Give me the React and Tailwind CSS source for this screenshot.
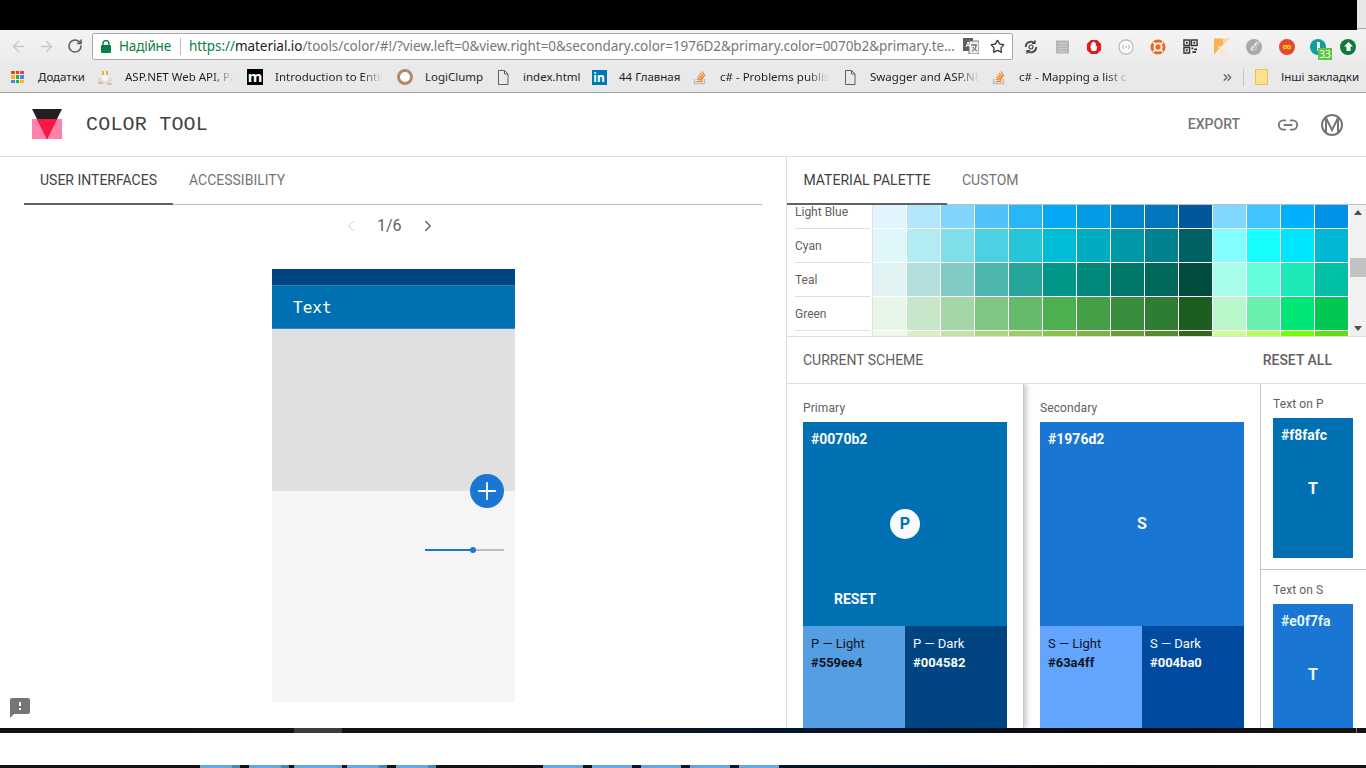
import { ArrowLeft, ArrowRight, RotateCw, Star, ChevronLeft, ChevronRight, Plus, Link2, ChevronsRight } from 'lucide-react'

const ui = "font-['Noto_Sans','Open_Sans',sans-serif]"
const rb = "font-['Roboto',sans-serif]"

const palette = [
  ['Light Blue', ['#e1f5fe', '#b3e5fc', '#81d4fa', '#4fc3f7', '#29b6f6', '#03a9f4', '#039be5', '#0288d1', '#0277bd', '#01579b', '#80d8ff', '#40c4ff', '#00b0ff', '#0091ea']],
  ['Cyan', ['#e0f7fa', '#b2ebf2', '#80deea', '#4dd0e1', '#26c6da', '#00bcd4', '#00acc1', '#0097a7', '#00838f', '#006064', '#84ffff', '#18ffff', '#00e5ff', '#00b8d4']],
  ['Teal', ['#e0f2f1', '#b2dfdb', '#80cbc4', '#4db6ac', '#26a69a', '#009688', '#00897b', '#00796b', '#00695c', '#004d40', '#a7ffeb', '#64ffda', '#1de9b6', '#00bfa5']],
  ['Green', ['#e8f5e9', '#c8e6c9', '#a5d6a7', '#81c784', '#66bb6a', '#4caf50', '#43a047', '#388e3c', '#2e7d32', '#1b5e20', '#b9f6ca', '#69f0ae', '#00e676', '#00c853']],
  ['', ['#f1f8e9', '#dcedc8', '#c5e1a5', '#aed581', '#9ccc65', '#8bc34a', '#7cb342', '#689f38', '#558b2f', '#33691e', '#ccff90', '#b2ff59', '#76ff03', '#64dd17']],
]

function DocIcon() {
  return (
    <svg width="12" height="15" viewBox="0 0 12 15" fill="none" stroke="#5f5f5f">
      <path d="M1.500.5h6l3.500 3.500v10.500h-9.500z" />
      <path d="M7.500.5v3.500h3.500" />
    </svg>
  )
}

function SoIcon() {
  return (
    <svg width="16" height="16" viewBox="0 0 16 16" fill="none">
      <path d="M2.500 10v4.500h10V10" stroke="#bcbbbb" strokeWidth="1.300" />
      <path d="M4.500 12.500h6M4.700 10.500l5.800.6M5.300 8.400l5.500 1.600M6.300 6.300l5 2.800M7.900 4.300l4.200 3.800M10 2.500l3 4.600" stroke="#f48024" strokeWidth="1.200" />
    </svg>
  )
}

function Bookmark({ icon, text, width, fade = true, className = '' }) {
  return (
    <div className={`flex items-center shrink-0 ${className}`}>
      <div className="w-[16px] h-[16px] flex items-center justify-center">{icon}</div>
      <span
        className={`ml-[12px] text-[11.500px] whitespace-nowrap text-[#1f1f1f] ${fade ? 'overflow-hidden [mask-image:linear-gradient(to_right,black_80%,transparent)]' : ''}`}
        style={{ width }}
      >
        {text}
      </span>
    </div>
  )
}

function ExtensionIcons() {
  return (
    <div className="flex items-center ml-[10px] h-[26px] mt-[1px]">
      <svg width="16" height="16" viewBox="0 0 18 18" fill="none">
        <path d="M3 9a6 6 0 0 1 10-4.500M15 9a6 6 0 0 1-10 4.500" stroke="#444" strokeWidth="2" />
        <path d="M13.500 1.500v3.500h-3.500M4.500 16.500v-3.500h3.500" stroke="#444" strokeWidth="1.500" />
        <circle cx="9" cy="9" r="2.200" stroke="#444" strokeWidth="1.300" />
      </svg>
      <svg width="13" height="14" viewBox="0 0 14 14" className="ml-[17px]">
        <rect width="14" height="14" fill="#b4b4b4" />
        <path d="M2 3h10M2 6h10M2 9h10M2 12h10" stroke="#d6d6d6" />
      </svg>
      <svg width="16" height="18" viewBox="0 0 18 18" className="ml-[17px]">
        <path d="M5.500 1h7L17 5.500v7L12.500 17h-7L1 12.500v-7z" fill="#d81e1e" />
        <path d="M6.500 13.500 5 9V7l1 1V4.500h1V3.500h1V3h1v.5h1v1h1V9l.5-1h1L12 12l-1 1.500z" fill="#fff" />
      </svg>
      <svg width="16" height="16" viewBox="0 0 18 18" fill="none" className="ml-[16px]">
        <circle cx="9" cy="9" r="8" fill="#fafafa" stroke="#b5b5b5" strokeWidth="1.200" />
        <path d="M6.500 7c-1 0-.5 2-1.500 2 1 0 .5 2 1.500 2M11.500 7c1 0 .5 2 1.500 2-1 0-.5 2-1.500 2M8 9h2" stroke="#9a9a9a" />
      </svg>
      <svg width="16" height="16" viewBox="0 0 18 18" fill="none" className="ml-[16px]">
        <circle cx="9" cy="9" r="8.500" fill="#f06a1d" />
        <circle cx="9" cy="9" r="4" stroke="#fff" strokeWidth="2" />
        <path d="M3.500 3.500 6.500 6.500M14.500 3.500l-3 3M3.500 14.500l3-3M14.500 14.500l-3-3" stroke="#fff" strokeWidth="1.800" />
      </svg>
      <svg width="15" height="15" viewBox="0 0 16 16" className="ml-[17px]">
        <rect width="16" height="16" fill="#f4f4f4" />
        <path d="M1 1h6v6H1zM9 1h6v6H9zM1 9h6v6H1z" fill="none" stroke="#333" strokeWidth="1.500" />
        <path d="M3 3h2v2H3zM11 3h2v2h-2zM3 11h2v2H3zM9 9h2v2H9zM12 10h3v2h-3zM10 13h4v2h-4z" fill="#333" />
      </svg>
      <svg width="16" height="18" viewBox="0 0 17 18" className="ml-[16px]">
        <path d="M0 0h10v6L0 17z" fill="#f9b54c" />
        <path d="M10 0h7L10 7z" fill="#f7d9a4" />
        <path d="M4 7l13 11H8z" fill="#fbe7cf" />
      </svg>
      <div className="ml-[16px] w-[16px] h-[16px] rounded-full bg-[#a9a9a9] flex items-center justify-center text-white text-[13px] italic font-['Liberation_Serif',serif]">
        ℰ
      </div>
      <div className="ml-[17px] w-[16px] h-[16px] rounded-full bg-[#e5482f] flex items-center justify-center text-[#f5c518] text-[14px] font-bold leading-none">
        ∞
      </div>
      <div className="relative ml-[15px] w-[16px] h-[16px] rounded-full bg-[#0f9d9d] flex items-center justify-center">
        <div className="w-[3px] h-[9px] bg-white" />
        <span className={`absolute left-[8px] top-[9px] w-[14px] h-[12px] bg-[#5cc63c] text-white text-[10px] leading-[12px] text-center ${ui}`}>33</span>
      </div>
      <div className="ml-[14px] w-[16px] h-[16px] rounded-full bg-[#0f7a3c] flex items-center justify-center">
        <svg width="9" height="9" viewBox="0 0 9 9"><path d="M4.500 0 9 4.500H6.500V9h-4V4.500H0z" fill="#fff" /></svg>
      </div>
    </div>
  )
}

function BrowserChrome() {
  return (
    <div className={`shrink-0 ${ui}`}>
      <div className="h-[32px] bg-gradient-to-b from-[#f4f4f4] to-[#ececec] flex items-center pl-[10px]">
        <ArrowLeft size={17} className="text-[#c8c8c8]" />
        <ArrowRight size={17} className="text-[#c8c8c8] ml-[11px]" />
        <RotateCw size={16} strokeWidth={2.400} className="text-[#5f5f5f] ml-[12px]" />
        <div className="ml-[9px] w-[921px] h-[27px] bg-white border border-[#a9a9a9] rounded-[2px] flex items-center pl-[8px] text-[13.500px] whitespace-nowrap overflow-hidden">
          <svg width="10" height="13" viewBox="0 0 10 13">
            <path d="M2 6V3.500a3 3 0 0 1 6 0V6" fill="none" stroke="#0b8043" strokeWidth="1.400" />
            <rect y="5" width="10" height="8" rx="1" fill="#0b8043" />
          </svg>
          <span className="ml-[8px] text-[#0b8043] tracking-[-0.200px]">Надійне</span>
          <span className="ml-[9px] w-px h-[17px] bg-[#bdbdbd]" />
          <span className="ml-[8px] w-[773px] tracking-[-0.060px] overflow-hidden">
            <span className="text-[#0b8043]">https://</span>
            <span className="text-[#222]">material.io</span>
            <span className="text-[#777]">/tools/color/#!/?view.left=0&amp;view.right=0&amp;secondary.color=1976D2&amp;primary.color=0070b2&amp;primary.te...</span>
          </span>
          <svg width="16" height="16" viewBox="0 0 16 16" className="ml-[1px] shrink-0">
            <rect width="10" height="13" fill="#5f5f5f" />
            <rect x="6" y="3" width="10" height="13" fill="#eee" stroke="#777" />
            <path d="M3 9l2-5 2 5M3.800 7.500h2.400" stroke="#fff" fill="none" />
            <path d="M8 7h6M11 6v1M9 13c3-1 4-3 4-6M10 9c1 2 2 3 4 4" stroke="#555" fill="none" />
          </svg>
          <Star size={15} strokeWidth={2} className="text-[#333] ml-[11px] shrink-0" />
        </div>
        <ExtensionIcons />
      </div>
      <div className="h-[31px] bg-[#e9e9e9] border-b border-[#a3a3a3] flex items-center">
        <div className="ml-[11px] grid grid-cols-3 gap-[1px] w-[13px] shrink-0">
          {['#ea4335', '#ea4335', '#ea4335', '#fbbc05', '#34a853', '#4285f4', '#4285f4', '#34a853', '#fbbc05'].map((c, i) => (
            <span key={i} className="w-[3.500px] h-[3.500px]" style={{ background: c }} />
          ))}
        </div>
        <span className="ml-[14px] text-[11.500px] text-[#1f1f1f] w-[46px] whitespace-nowrap">Додатки</span>
        <Bookmark
          className="ml-[13px]"
          icon={<svg width="16" height="16" viewBox="0 0 16 16"><ellipse cx="8" cy="11" rx="7" ry="3.500" fill="#d9d9d9" /><path d="M6 2v5M10 2v5" stroke="#e8b23c" strokeWidth="2" /><circle cx="8" cy="9" r="3.500" fill="#f4f4f4" /><path d="M1 14h5M10 15h5" stroke="#e89a2c" /></svg>}
          text="ASP.NET Web API, Pa"
          width={109}
        />
        <Bookmark
          className="ml-[13px]"
          icon={<span className="w-[16px] h-[16px] bg-black text-white text-[15px] leading-[14px] text-center font-bold">m</span>}
          text="Introduction to Entity"
          width={108}
        />
        <Bookmark
          className="ml-[14px]"
          icon={<span className="w-[16px] h-[16px] rounded-full border-[3px] border-[#b08a68] bg-white" />}
          text="LogiClump"
          width={57}
          fade={false}
        />
        <Bookmark className="ml-[13px]" icon={<DocIcon />} text="index.html" width={55} fade={false} />
        <Bookmark
          className="ml-[13px]"
          icon={<span className="w-[15px] h-[15px] bg-[#0077b5] text-white text-[12px] leading-[15px] text-center font-bold">in</span>}
          text="44 Главная"
          width={60}
          fade={false}
        />
        <Bookmark className="ml-[13px]" icon={<SoIcon />} text="c# - Problems publis" width={109} />
        <Bookmark className="ml-[13px]" icon={<DocIcon />} text="Swagger and ASP.NE" width={109} />
        <Bookmark className="ml-[12px]" icon={<SoIcon />} text="c# - Mapping a list c" width={110} />
        <ChevronsRight size={13} strokeWidth={2.500} className="text-[#666] ml-[92px]" />
        <span className="ml-[9px] w-px h-[17px] bg-[#c4c4c4]" />
        <svg width="13" height="16" viewBox="0 0 13 16" className="ml-[11px]">
          <path d="M.5.5h12v15H.5z" fill="#fbe08f" stroke="#e8c14f" />
        </svg>
        <span className="ml-[13px] text-[11.500px] text-[#1f1f1f] whitespace-nowrap">Інші закладки</span>
      </div>
    </div>
  )
}

function Header() {
  return (
    <div className="h-[64px] shrink-0 bg-white border-b border-[#e0e0e0] flex items-center pl-[32px] pr-[22px]">
      <svg width="30" height="30" viewBox="0 0 30 30" className="mb-[2px]">
        <rect y="10" width="30" height="20" fill="#ff80ab" />
        <path d="M0 0h30L15 30z" fill="#212121" />
        <path d="M5 10h20L15 30z" fill="#ff1744" />
      </svg>
      <span className="ml-[24px] text-[20px] tracking-[0.200px] text-[#424242] font-['Liberation_Mono',monospace] whitespace-nowrap">COLOR TOOL</span>
      <span className={`ml-auto text-[14px] font-medium text-[#757575] ${rb}`}>EXPORT</span>
      <Link2 size={22} strokeWidth={2} className="text-[#757575] ml-[37px]" />
      <svg width="24" height="24" viewBox="0 0 24 24" fill="none" stroke="#757575" className="ml-[21px]">
        <circle cx="12" cy="12" r="10" strokeWidth="2" />
        <path d="M6 4.500v15M18 4.500v15M6 5l6 12 6-12" strokeWidth="2" />
      </svg>
    </div>
  )
}

function PhonePreview() {
  return (
    <div className="relative mt-[23px] ml-[272px] w-[243px] h-[433px] flex flex-col">
      <div className="h-[17px] bg-[#004582] border-b border-[#3a7cb0]" />
      <div className="h-[43px] bg-[#0070b2] border-b border-[#2f8ac4] pt-[2px] pl-[21px] flex items-center">
        <span className="text-[16px] text-[#f8fafc] font-['DejaVu_Sans_Mono',monospace]">Text</span>
      </div>
      <div className="h-[162px] bg-[#e0e0e0]" />
      <div className="flex-1 bg-[#f5f5f5] flex flex-col items-end pr-[11px] pt-[58px]">
        <div className="w-[79px] h-[2px] bg-[#bdbdbd] relative">
          <div className="w-[47px] h-[2px] bg-[#1976d2]" />
          <div className="absolute left-[45px] top-[-2px] w-[6px] h-[6px] rounded-full bg-[#1976d2]" />
        </div>
      </div>
      <div className="absolute left-[198px] top-[205px] w-[34px] h-[34px] rounded-full bg-[#1976d2] flex items-center justify-center">
        <Plus size={28} strokeWidth={1.600} className="text-[#f8fafc]" />
      </div>
    </div>
  )
}

function LeftPanel() {
  return (
    <div className={`relative w-[786px] shrink-0 bg-white ${rb}`}>
      <div className="mx-[24px] h-[48px] border-b border-[#bdbdbd] flex text-[14px]">
        <div className="w-[149px] h-[48px] pt-[1px] border-b-2 border-[#616161] flex items-center justify-center text-[#424242]">USER INTERFACES</div>
        <div className="ml-[16px] h-[47px] flex items-center text-[#757575]">ACCESSIBILITY</div>
      </div>
      <div className="h-[41px] flex items-center">
        <ChevronLeft size={18} strokeWidth={1.500} className="ml-[342px] text-[#e0e0e0]" />
        <span className="ml-[17px] text-[16px] text-[#5f5f5f]">1/6</span>
        <ChevronRight size={18} strokeWidth={1.800} className="ml-[17px] text-[#616161]" />
      </div>
      <PhonePreview />
      <svg width="24" height="24" viewBox="0 0 24 24" className="absolute left-[8px] bottom-[8px]">
        <path fill="#757575" d="M20 2H4c-1.100 0-1.990.9-1.990 2L2 22l4-4h14c1.100 0 2-.9 2-2V4c0-1.100-.9-2-2-2zm-7 12h-2v-2h2v2zm0-4h-2V6h2v4z" />
      </svg>
    </div>
  )
}

function Palette() {
  return (
    <div className="h-[132px] flex overflow-hidden border-b border-[#e0e0e0] shrink-0">
      <div className="w-[563px] -mt-[10px]">
        {palette.map(([name, colors], i) => (
          <div key={i} className="h-[34px] flex">
            <div className="w-[86px] pl-[8px] pr-[2px] border-r border-[#e4e4e4]">
              <div className="h-[34px] border-b border-[#e0e0e0] flex items-center text-[12px] text-[#616161]">{name}</div>
            </div>
            <div className="flex">
              {colors.map(c => (
                <div key={c} className="w-[34px] h-[34px] border-r border-b border-white" style={{ background: c }} />
              ))}
            </div>
          </div>
        ))}
      </div>
      <div className="w-[16px] bg-[#f1f1f1] flex flex-col items-center justify-between py-[5px] relative">
        <svg width="8" height="5" viewBox="0 0 8 5"><path d="M4 0l4 5H0z" fill="#505050" /></svg>
        <div className="absolute top-[53px] left-0 w-[16px] h-[19px] bg-[#c1c1c1]" />
        <svg width="8" height="5" viewBox="0 0 8 5"><path d="M0 0h8L4 5z" fill="#505050" /></svg>
      </div>
    </div>
  )
}

function ShadeCell({ name, hex, bg, dark }) {
  return (
    <div className={`w-[102px] pl-[8px] pt-[9px] text-[13px] ${dark ? 'text-[#f8fafc]' : 'text-[#10161c]'}`} style={{ background: bg }}>
      <div className="leading-[18px]">{name}</div>
      <div className="mt-[1px] font-bold leading-[18px]">{hex}</div>
    </div>
  )
}

function ColorCard({ title, hex, letter, light, dark, className = '', reset }) {
  return (
    <div className={`shrink-0 px-[16px] pt-[16px] bg-white border-r border-[#c4c4c4] ${className}`}>
      <div className="text-[12px] text-[#616161] leading-[16px] h-[22px] tracking-[0.100px]">{title}</div>
      <div className="relative h-[204px] pl-[8px] pt-[8px] text-[14px] font-bold leading-[18px] text-[#f8fafc]" style={{ background: hex }}>
        {hex}
        {letter === 'P' ? (
          <div className="absolute left-[87px] top-[87px] w-[30px] h-[30px] rounded-full bg-[#f8fafc] text-[#0070b2] text-[16px] flex items-center justify-center">P</div>
        ) : (
          <div className="absolute left-[87px] top-[87px] w-[30px] h-[30px] text-[16px] flex items-center justify-center">S</div>
        )}
        {reset && <div className="absolute left-[31px] top-[169px] leading-[16px]">RESET</div>}
      </div>
      <div className="flex h-[102px]">
        <ShadeCell {...light} />
        <ShadeCell {...dark} dark />
      </div>
    </div>
  )
}

function TextSwatch({ title, hex, bg, color, className = '' }) {
  return (
    <div className={`px-[12px] pt-[12px] ${className}`}>
      <div className="text-[12px] text-[#616161] leading-[16px] h-[22px] tracking-[0.100px]">{title}</div>
      <div className="w-[80px] h-[140px] pl-[8px] pt-[8px] text-[14px] font-bold leading-[18px]" style={{ background: bg, color }}>
        {hex}
        <div className="mt-[36px] ml-[-8px] text-center text-[16px]">T</div>
      </div>
    </div>
  )
}

function RightPanel() {
  return (
    <div className={`w-[580px] shrink-0 bg-white border-l border-[#dcdcdc] flex flex-col overflow-hidden ${rb}`}>
      <div className="h-[48px] shrink-0 border-b border-[#bdbdbd] flex text-[14px]">
        <div className="w-[160px] h-[48px] pt-[1px] border-b-2 border-[#616161] flex items-center justify-center text-[#424242]">MATERIAL PALETTE</div>
        <div className="ml-[15px] h-[47px] flex items-center text-[#757575]">CUSTOM</div>
      </div>
      <Palette />
      <div className="h-[47px] pt-[1px] shrink-0 border-b border-[#e0e0e0] flex items-center justify-between pl-[16px] pr-[34px] text-[14px]">
        <span className="text-[#616161]">CURRENT SCHEME</span>
        <span className="font-medium text-[#616161]">RESET ALL</span>
      </div>
      <div className="flex flex-1 min-h-0 overflow-hidden">
        <ColorCard
          title="Primary" hex="#0070b2" letter="P" reset
          className="relative w-[238px] -ml-px border-l shadow-[2px_0_6px_rgba(0,0,0,0.25)]"
          light={{ name: 'P — Light', hex: '#559ee4', bg: '#559ee4' }}
          dark={{ name: 'P — Dark', hex: '#004582', bg: '#004582' }}
        />
        <ColorCard
          title="Secondary" hex="#1976d2" letter="S"
          className="w-[237px]"
          light={{ name: 'S — Light', hex: '#63a4ff', bg: '#63a4ff' }}
          dark={{ name: 'S — Dark', hex: '#004ba0', bg: '#004ba0' }}
        />
        <div className="flex-1">
          <TextSwatch title="Text on P" hex="#f8fafc" bg="#0070b2" color="#f8fafc" className="h-[186px] border-b border-[#c4c4c4]" />
          <TextSwatch title="Text on S" hex="#e0f7fa" bg="#1976d2" color="#e0f7fa" className="pt-[11px]" />
        </div>
      </div>
    </div>
  )
}

function Taskbar() {
  const strip = 'bg-[linear-gradient(to_right,#111111_0%,#141414_35%,#03152b_58%,#0b0b0e_80%,#141414_100%)]'
  const tabs = [
    ['w-[40px]', 'ml-[200px]', true], ['w-[40px]', 'ml-[9px]', true], ['w-[48px]', 'ml-[5px]', false], ['w-[40px]', 'ml-[5px]', true], ['w-[40px]', 'ml-[9px]', true],
    ['w-[40px]', 'ml-[107px]'], ['w-[40px]', 'ml-[9px]'], ['w-[40px]', 'ml-[9px]'], ['w-[40px]', 'ml-[9px]'], ['w-[40px]', 'ml-[9px]'],
  ]
  return (
    <div className="shrink-0">
      <div className={`h-[5px] flex ${strip}`}>
        <div className="ml-[294px] w-[48px] bg-[#3c3c3c]" />
        <div className="ml-[1014px] w-px bg-[#777]" />
      </div>
      <div className="h-[32px] bg-white" />
      <div className={`h-[3px] flex ${strip}`}>
        {tabs.map(([w, m, tail], i) => (
          <div key={i} className={`${w} ${m} bg-[#62a8e4] flex justify-end`}>
            {tail && <div className="w-[8px] bg-[#4f86b4]" />}
          </div>
        ))}
      </div>
    </div>
  )
}

export default function App() {
  return (
    <div className="w-[1366px] h-[768px] overflow-hidden flex flex-col bg-white">
      <div className="h-[30px] shrink-0 bg-[#e8e8e8] flex">
        <div className="w-[1357px] bg-black" />
        <div className="flex-1 mt-[28px] h-px bg-[#a9a9a9]" />
      </div>
      <BrowserChrome />
      <Header />
      <div className="flex flex-1 min-h-0 overflow-hidden">
        <LeftPanel />
        <RightPanel />
      </div>
      <Taskbar />
    </div>
  )
}
